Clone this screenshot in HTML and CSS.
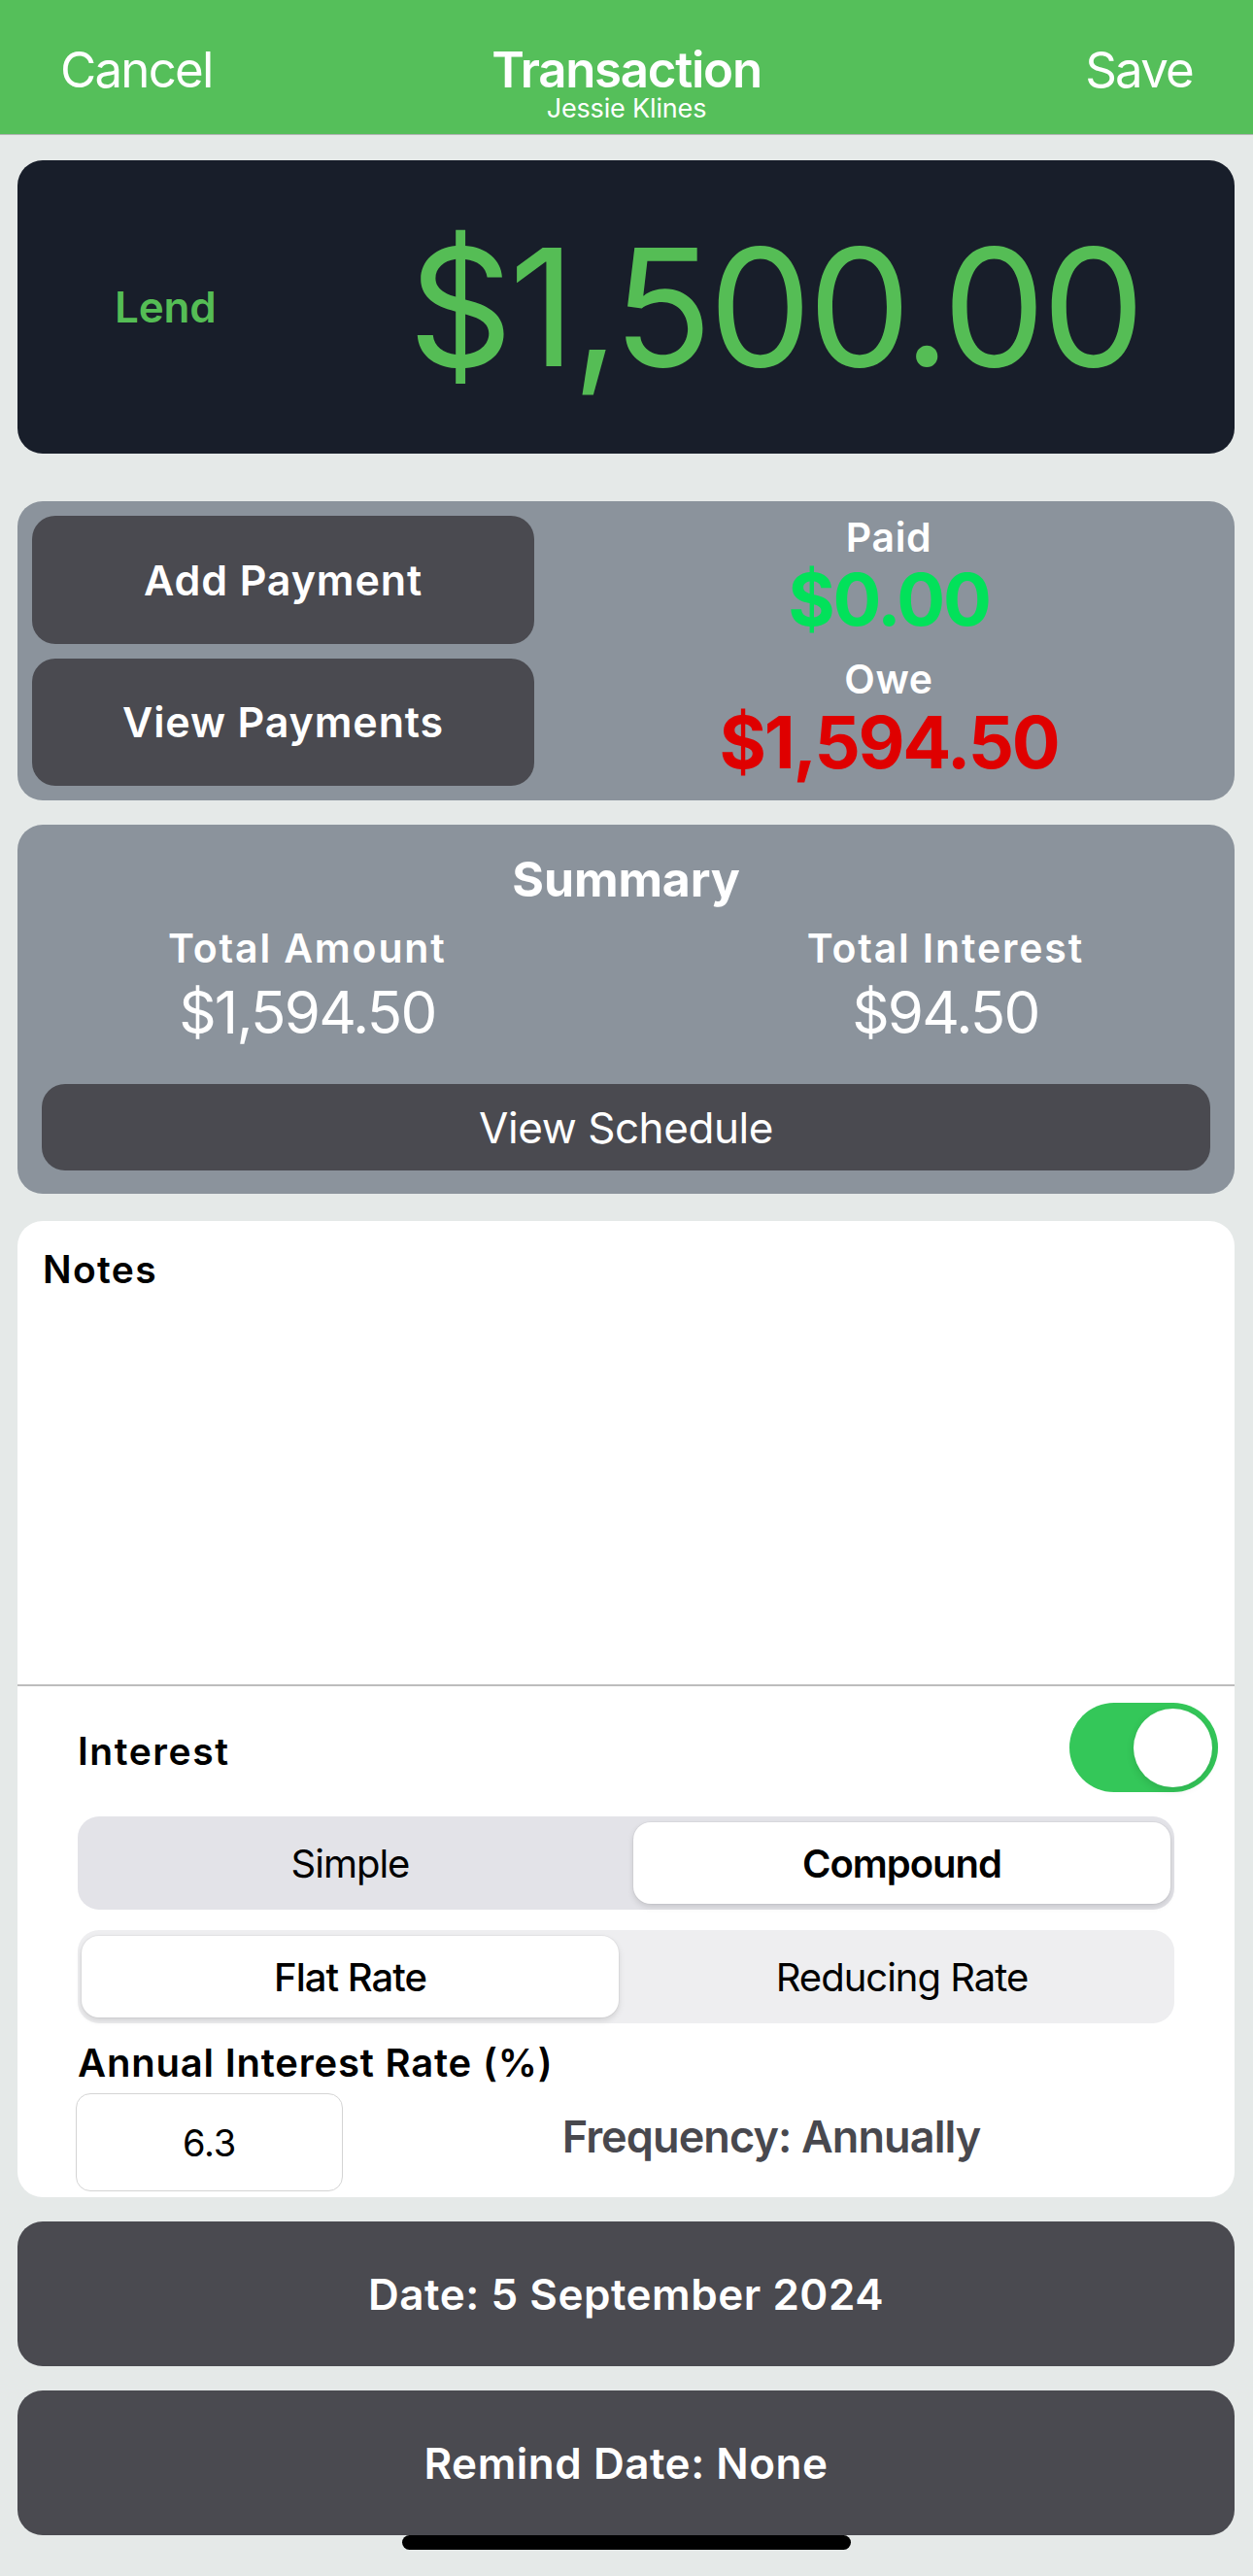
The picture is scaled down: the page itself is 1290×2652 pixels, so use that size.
FILE: index.html
```html
<!DOCTYPE html>
<html lang="en">
<head>
  <meta charset="UTF-8" />
  <meta name="viewport" content="width=device-width, initial-scale=1.0" />
  <title>Transaction</title>
  <link rel="stylesheet" href="styles.css">
</head>
<body>
  <header class="nav">
    <span class="nav-btn">Cancel</span>
    <div class="nav-title">
      <div class="title">Transaction</div>
      <div class="subtitle">Jessie Klines</div>
    </div>
    <span class="nav-btn right">Save</span>
  </header>

  <main class="content">
    <section class="card amount-card">
      <span class="type">Lend</span>
      <span class="amount">$1,500.00</span>
    </section>

    <section class="card pay-card">
      <div class="pay-buttons">
        <button class="dark-btn">Add Payment</button>
        <button class="dark-btn">View Payments</button>
      </div>
      <div class="pay-status">
        <div class="status-label">Paid</div>
        <div class="status-value paid">$0.00</div>
        <div class="status-label owe-label">Owe</div>
        <div class="status-value owe">$1,594.50</div>
      </div>
    </section>

    <section class="card summary-card">
      <h2>Summary</h2>
      <div class="summary-cols">
        <div class="col">
          <div class="col-label">Total Amount</div>
          <div class="col-value">$1,594.50</div>
        </div>
        <div class="col">
          <div class="col-label">Total Interest</div>
          <div class="col-value">$94.50</div>
        </div>
      </div>
      <button class="schedule-btn">View Schedule</button>
    </section>

    <section class="card notes-card">
      <div class="notes">
        <div class="notes-title">Notes</div>
      </div>
      <div class="interest-row">
        <span class="interest-label">Interest</span>
        <span class="toggle"><span class="knob"></span></span>
      </div>
      <div class="segmented strong">
        <div class="segment">Simple</div>
        <div class="segment selected">Compound</div>
      </div>
      <div class="segmented second">
        <div class="segment selected">Flat Rate</div>
        <div class="segment">Reducing Rate</div>
      </div>
      <div class="rate-label">Annual Interest Rate (%)</div>
      <div class="rate-row">
        <div class="rate-input">6.3</div>
        <div class="frequency">Frequency: Annually</div>
      </div>
    </section>

    <button class="wide-btn date-btn">Date: 5 September 2024</button>
    <button class="wide-btn">Remind Date: None</button>
    <div class="home-indicator"></div>
  </main>
</body>
</html>
```

FILE: styles.css
```css
:root {
  --green: #55bf5a;
  --money-green: #55bd55;
  --card-grey: #8b939c;
  --button-dark: #4a4a50;
  --radius: 26px;
}
body {
  margin: 0;
  background: #e5e9e8;
  font-family: Inter, "Noto Sans", sans-serif;
  letter-spacing: -0.01em;
}
button {
  font-family: inherit;
  border: none;
  cursor: pointer;
}
.nav {
  height: 139px;
  box-sizing: border-box;
  background: var(--green);
  border-bottom: 1px solid #b0b4b2;
  display: grid;
  grid-template-columns: 1fr auto 1fr;
  align-items: start;
  padding: 46px 62px 0;
  color: white;
}
.nav-btn {
  font-size: 51px;
  line-height: 51px;
  letter-spacing: -0.035em;
}
.nav-btn.right {
  justify-self: end;
}
.nav-title {
  text-align: center;
}
.title {
  font-size: 51px;
  line-height: 51px;
  font-weight: 600;
  letter-spacing: -0.025em;
}
.subtitle {
  font-size: 27px;
  line-height: 27px;
  margin-top: 1px;
}
.content {
  padding: 26px 19px 0 18px;
  display: flex;
  flex-direction: column;
}
.card {
  border-radius: var(--radius);
}
.amount-card {
  height: 302px;
  box-sizing: border-box;
  background: #181e2a;
  color: var(--money-green);
  display: flex;
  align-items: center;
  justify-content: space-between;
  padding: 0 96px 0 100px;
}
.type {
  font-size: 44px;
  line-height: 1;
  font-weight: 600;
}
.amount {
  font-size: 168px;
  line-height: 1;
  font-weight: 400;
  letter-spacing: -0.022em;
}
.pay-card {
  margin-top: 49px;
  height: 308px;
  box-sizing: border-box;
  background: var(--card-grey);
  display: flex;
  gap: 15px;
  padding: 15px 6px 15px 15px;
}
.pay-buttons {
  width: 517px;
  display: flex;
  flex-direction: column;
  gap: 15px;
}
.dark-btn {
  flex: 1;
  background: var(--button-dark);
  color: white;
  border-radius: 24px;
  font-size: 43px;
  font-weight: 600;
  letter-spacing: 0.02em;
}
.pay-status {
  flex: 1;
  text-align: center;
  color: white;
}
.status-label {
  font-size: 41px;
  line-height: 41px;
  font-weight: 600;
  margin-top: 1.5px;
  letter-spacing: 0.015em;
}
.status-value {
  font-size: 74px;
  line-height: 74px;
  font-weight: 700;
  margin-top: 6.5px;
  letter-spacing: -0.03em;
}
.owe-label {
  margin-top: 25px;
}
.paid {
  color: #02e15a;
}
.owe {
  color: #df0000;
  margin-top: 7px;
}
.summary-card {
  margin-top: 25px;
  height: 380px;
  box-sizing: border-box;
  background: var(--card-grey);
  color: white;
  display: flex;
  flex-direction: column;
  padding: 31px 25px 24px;
}
.summary-card h2 {
  margin: 0;
  font-size: 50px;
  line-height: 50px;
  font-weight: 700;
  text-align: center;
}
.summary-cols {
  display: flex;
  justify-content: space-between;
  padding: 0 130px;
  margin-top: 25.5px;
  text-align: center;
}
.col-label {
  font-size: 41px;
  line-height: 40px;
  font-weight: 600;
  letter-spacing: 0.045em;
}
.col-value {
  font-size: 60px;
  line-height: 60px;
  margin-top: 16.5px;
  letter-spacing: -0.03em;
}
.schedule-btn {
  margin-top: auto;
  height: 89px;
  background: var(--button-dark);
  color: white;
  border-radius: 24px;
  font-size: 44px;
  letter-spacing: -0.01em;
}
.notes-card {
  margin-top: 28px;
  background: white;
  padding-bottom: 6px;
}
.notes {
  height: 479px;
  box-sizing: border-box;
  padding: 29.5px 26px;
  border-bottom: 2px solid #bdbdbd;
}
.notes-title {
  font-size: 39px;
  line-height: 39px;
  font-weight: 600;
  letter-spacing: 0.035em;
}
.interest-row {
  margin-top: 17px;
  height: 92px;
  display: flex;
  align-items: center;
  justify-content: space-between;
  padding: 0 17px 0 62px;
}
.interest-label {
  font-size: 39px;
  line-height: 39px;
  font-weight: 600;
  margin-top: 7px;
  letter-spacing: 0.04em;
}
.toggle {
  width: 153px;
  height: 92px;
  box-sizing: border-box;
  border-radius: 46px;
  background: #34c759;
  display: flex;
  justify-content: flex-end;
  align-items: center;
  padding: 0 6px;
}
.knob {
  width: 81px;
  height: 81px;
  border-radius: 50%;
  background: white;
  box-shadow: 0 3px 8px rgba(0, 0, 0, 0.12);
}
.segmented {
  margin: 25px 62px 0;
  height: 96px;
  box-sizing: border-box;
  padding: 6px 4px;
  display: flex;
  gap: 15px;
  background: #eeeef0;
  border-radius: 22px;
}
.segmented.strong {
  background: #e3e3e8;
}
.segmented.second {
  margin-top: 21px;
}
.segment {
  flex: 1;
  display: flex;
  align-items: center;
  justify-content: center;
  font-size: 40px;
  border-radius: 18px;
  color: black;
  letter-spacing: -0.025em;
}
.segment.selected {
  background: white;
  font-weight: 500;
  box-shadow: 0 3px 6px rgba(0, 0, 0, 0.13), 0 0 0 1px rgba(0, 0, 0, 0.03);
}
.strong .segment.selected {
  font-weight: 600;
}
.rate-label {
  margin: 20.5px 0 0 62px;
  font-size: 40px;
  line-height: 40px;
  font-weight: 600;
  letter-spacing: 0.02em;
}
.rate-row {
  display: flex;
  align-items: center;
  margin-top: 11.5px;
  padding: 0 36px 0 60px;
}
.rate-input {
  width: 275px;
  height: 101px;
  box-sizing: border-box;
  border: 1.5px solid #d4d4d4;
  border-radius: 15px;
  display: flex;
  align-items: center;
  justify-content: center;
  font-size: 38px;
}
.frequency {
  flex: 1;
  text-align: center;
  font-size: 45px;
  line-height: 45px;
  font-weight: 600;
  color: #48484e;
  margin-bottom: 12px;
  letter-spacing: -0.02em;
}
.wide-btn {
  margin-top: 25px;
  height: 149px;
  background: var(--button-dark);
  color: white;
  border-radius: var(--radius);
  font-size: 44px;
  font-weight: 600;
  letter-spacing: 0.012em;
}
.home-indicator {
  width: 462px;
  height: 15px;
  margin: 0 auto;
  background: black;
  border-radius: 8px;
}
```
